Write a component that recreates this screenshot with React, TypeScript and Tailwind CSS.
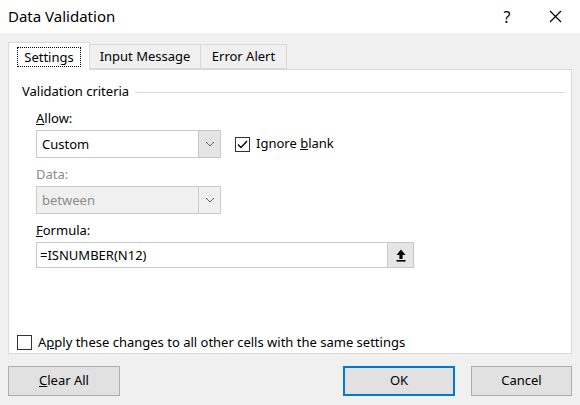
import React from "react";

const Chevron = () => (
  <svg width="10" height="6" viewBox="0 0 10 6"><path d="M1 1l4 4 4-4" fill="none" stroke="#606060" strokeWidth="1" /></svg>
);

export default function App() {
  const f = { fontFamily: '"Segoe UI","Noto Sans",sans-serif' };
  return (
    <div style={f} className="w-[580px] h-[405px] bg-[#f0f0f0] text-[13px] text-black flex flex-col overflow-hidden">
      <div className="h-[33px] bg-white flex items-center pl-[8px] shrink-0">
        <span className="text-[15px]">Data Validation</span>
        <span className="ml-auto text-[16px] w-[20px] text-center mr-[32px]">?</span>
        <svg width="13" height="13" viewBox="0 0 13 13" className="mr-[18px]"><path d="M1 1l11 11M12 1L1 12" stroke="#000" strokeWidth="1.2" /></svg>
      </div>
      <div className="px-[8px] pt-[9px]">
        <div className="flex h-[27px] items-end">
          <div className="w-[82px] h-[28px] bg-white border border-b-0 border-[#d9d9d9] flex items-center justify-center relative z-10 -mb-px">
            <span className="border border-dotted border-black px-[6px] leading-[18px]">Settings</span>
          </div>
          <div className="w-[111px] h-[25px] border border-l-0 border-[#d9d9d9] flex items-center justify-center">Input Message</div>
          <div className="w-[86px] h-[25px] border border-l-0 border-[#d9d9d9] flex items-center justify-center">Error Alert</div>
        </div>
        <div className="h-[285px] bg-white border border-[#d9d9d9] pl-[13px] pr-[6px] flex flex-col">
          <div className="flex items-center mt-[13px] h-[18px]">
            <span>Validation criteria</span>
            <div className="flex-1 h-px bg-[#dcdcdc] ml-[6px]" />
          </div>
          <div className="pl-[14px]">
            <div className="mt-[8px] h-[18px]"><span className="underline">A</span>llow:</div>
            <div className="flex items-center mt-[3px]">
              <div className="w-[185px] h-[28px] border border-[#c8c8c8] flex">
                <span className="flex-1 pl-[5px] leading-[26px]">Custom</span>
                <div className="w-[22px] bg-[#e5e5e5] border-l border-[#c8c8c8] flex items-center justify-center"><Chevron /></div>
              </div>
              <div className="ml-[14px] w-[15px] h-[15px] border border-[#333] flex items-center justify-center">
                <svg width="11" height="9" viewBox="0 0 11 9"><path d="M1 4.5l3 3L10 1" fill="none" stroke="#000" strokeWidth="1.3" /></svg>
              </div>
              <span className="ml-[6px]">Ignore <span className="underline">b</span>lank</span>
            </div>
            <div className="mt-[7px] h-[18px] text-[#8c8c8c]">Data:</div>
            <div className="mt-[3px] w-[185px] h-[28px] border border-[#cccccc] bg-[#f0f0f0] flex">
              <span className="flex-1 pl-[5px] leading-[26px] text-[#8c8c8c]">between</span>
              <div className="w-[22px] border-l border-[#cccccc] flex items-center justify-center"><Chevron /></div>
            </div>
            <div className="mt-[7px] h-[18px]"><span className="underline">F</span>ormula:</div>
            <div className="mt-[3px] w-[378px] h-[26px] border border-[#c8c8c8] flex">
              <span className="flex-1 pl-[3px] leading-[24px]">=ISNUMBER(N12)</span>
              <div className="w-[26px] bg-[#e5e5e5] border-l border-[#c8c8c8] flex items-center justify-center">
                <svg width="10" height="13" viewBox="0 0 10 13"><path d="M5 0.5L9.5 6H6.6V10H3.4V6H0.5Z" fill="#000" /><rect x="0.5" y="11" width="9" height="1.6" fill="#000" /></svg>
              </div>
            </div>
          </div>
          <div className="flex items-center mt-[65px] -ml-[5px]">
            <div className="w-[15px] h-[15px] border border-[#333]" />
            <span className="ml-[6px]">A<span className="underline">p</span>ply these changes to all other cells with the same settings</span>
          </div>
        </div>
      </div>
      <div className="flex px-[8px] mt-[12px]">
        <div className="w-[112px] h-[30px] bg-[#e1e1e1] border border-[#adadad] flex items-center justify-center"><span><span className="underline">C</span>lear All</span></div>
        <div className="ml-auto w-[112px] h-[30px] bg-[#e1e1e1] border-2 border-[#0078d7] flex items-center justify-center">OK</div>
        <div className="ml-[16px] w-[101px] h-[30px] bg-[#e1e1e1] border border-[#adadad] flex items-center justify-center">Cancel</div>
      </div>
    </div>
  );
}
